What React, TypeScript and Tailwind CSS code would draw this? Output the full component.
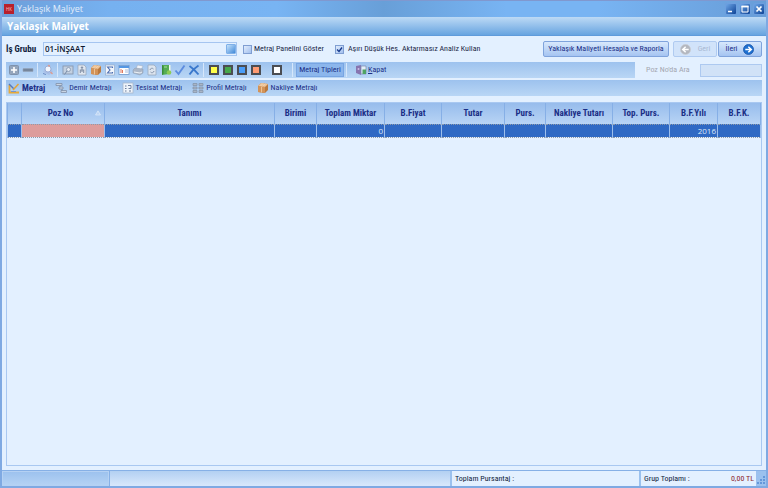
import React from "react";

const I = ({ children }: { children: React.ReactNode }) => (
  <svg viewBox="0 0 12 12" className="h-3 w-3 shrink-0" aria-hidden="true">{children}</svg>
);

const icons = {
  Ekle: <I><rect x="1.5" y="1.5" width="9" height="9" rx="1" fill="#94a5bc" stroke="#7f92ac" /><path d="M6 3v6M3 6h6" stroke="#fff" strokeWidth="1.6" /></I>,
  Sil: <I><rect x="1" y="4.5" width="10" height="3" rx=".5" fill="#76869c" stroke="#94a3b8" strokeWidth=".6" /></I>,
  Temizle: <I><path d="M1 8l4-7 3 1 3 6-4 3z" fill="#a9c0e8" /><circle cx="6" cy="5" r="3" fill="#f1f6fe" stroke="#8ea3cf" strokeWidth=".8" /><path d="M8.500 8l2 2M6 1.500l2 .5" stroke="#dc9c90" strokeWidth="1.400" /><path d="M1 9.500l3 1" stroke="#6c8ac4" /></I>,
  Önizle: <I><rect x="1" y="2" width="10" height="8" fill="#c3d0e0" stroke="#8798b0" strokeWidth=".9" /><circle cx="6.500" cy="5.500" r="2" fill="#e4ebf4" stroke="#8495ae" strokeWidth=".8" /><path d="M5 7L2.500 10.500" stroke="#7488a5" /></I>,
  Bul: <I><path d="M2 1h6l2 2v8H2z" fill="#dfe6ef" stroke="#95a2b5" strokeWidth=".7" /><circle cx="6" cy="3.600" r="1.200" fill="#8592a8" /><path d="M4.300 9V6h3.400v3M6 5v3" stroke="#8592a8" strokeWidth="1.100" fill="none" /></I>,
  Paket: <I><path d="M1 4l3-3 7 1v6l-3 3-7-1z" fill="#b9793f" /><path d="M1 4l3-3 7 1-3 3z" fill="#edc397" /><path d="M8 5v6L1 10V4z" fill="#d39358" /><path d="M3.200 4.300l3-3M5.500 4.600l3-3M4.500 4.500v6" stroke="#f6d8b2" strokeWidth=".7" /></I>,
  Topla: <I><rect x="1.500" y="1" width="9" height="10" fill="#f1f6fc" stroke="#96acc9" strokeWidth=".7" /><path d="M8.500 4V3H3.500L6 6 3.500 9h5V8" fill="none" stroke="#4a6cb0" strokeWidth="1.100" /></I>,
  Tablo: <I><rect x="1" y="1.500" width="10" height="9" fill="#fff" stroke="#6b97ce" strokeWidth=".8" /><path d="M1 3h10" stroke="#5597e3" strokeWidth="2" /><path d="M3 5v4M4.500 6v3" stroke="#df7960" /><path d="M7 6h3M7 8h3" stroke="#a7badb" /></I>,
  Yazdır: <I><path d="M4 5l1.500-4L11 2 9 6z" fill="#eff3f9" stroke="#9aa8bd" strokeWidth=".5" /><path d="M1 6l2-2 8 1v4l-3 2-7-2z" fill="#aab6c7" stroke="#8b9ab1" strokeWidth=".5" /><path d="M2 8l6 1 2-1" stroke="#edf2f8" fill="none" /></I>,
  Yenile: <I><path d="M2 1h6l2 2v8H2z" fill="#dde5ef" stroke="#9aa9be" strokeWidth=".8" /><path d="M4 6a2 2 0 013.500-1M8 7a2 2 0 01-3.500 1" stroke="#8292aa" fill="none" /></I>,
  Aktar: <I><path d="M2 1h7v9l-7 1z" fill="#55ad55" /><path d="M2 1l1.500 1v8L2 11z" fill="#398b3b" /><path d="M9 1h1.500v8H9z" fill="#eef7e9" /><circle cx="9" cy="8.500" r="2.300" fill="#8ccb55" /><path d="M4 3h3" stroke="#a5dca0" /></I>,
  Onayla: <I><path d="M1.500 6.500L4.500 10 10.500 1.500" fill="none" stroke="#5d8cdf" strokeWidth="1.900" /></I>,
  İptal: <I><path d="M1.500 2Q6 5 10.500 10.500M10.500 1.500Q5 5 1.500 10.500" fill="none" stroke="#3a78cc" strokeWidth="1.900" /></I>,
  Metraj: <I><path d="M1.500 3v7.500H11" fill="none" stroke="#e6a93a" strokeWidth="1.800" /><path d="M1 2l5 5" stroke="#5679b9" strokeWidth="1.400" /><path d="M5 8l5.500-6" stroke="#e3a43a" strokeWidth="1.600" /><path d="M3 9.500h5" stroke="#7795cb" /></I>,
  Demir: <I><path d="M1 1.500h6v2H1zM4 5h4v2H4zM6 8.500h5.500v2H6z" fill="#c9d5e4" stroke="#8191a8" strokeWidth=".8" /><path d="M5 3.500V5M7 7v1.500" stroke="#8191a8" /></I>,
  Tesisat: <I><rect x="1" y="1" width="10" height="10" fill="#eef4fb" stroke="#a9b7cb" strokeWidth=".8" /><path d="M3 4h1.500M3 6.500h1.500M3 9h1.500M7 9h2" stroke="#6c7d9b" /><path d="M6 3.500h3v3H6.500" stroke="#7586a5" fill="none" /></I>,
  Profil: <I><path d="M1 1.500h4v2H1zM7 1.500h4v2H7zM1 5h4v2H1zM7 5h4v2H7zM1 8.500h4v2H1zM7 8.500h4v2H7z" fill="#a9b5c6" stroke="#8795ab" strokeWidth=".8" /></I>,
  Kapat: <I><path d="M1 2l5-1v10L1 9z" fill="#8775b0" /><path d="M6 2h5v8H6z" fill="#e3eef8" stroke="#7587b0" strokeWidth=".7" /><path d="M7.500 5.500H11V10H7.500z" fill="#4fa364" /><circle cx="3.500" cy="5" r="1" fill="#c9bde4" /></I>,
};
type IconName = keyof typeof icons;

const groups: IconName[][] = [
  ["Ekle", "Sil"],
  ["Temizle"],
  ["Önizle", "Bul", "Paket", "Topla", "Tablo", "Yazdır", "Yenile", "Aktar", "Onayla", "İptal"],
];

const Sep = () => <span className="mr-[3px] ml-[2px] h-[14px] w-px shrink-0 bg-[#d6e7fb]" />;

const Tool = ({ name }: { name: IconName }) => (
  <button aria-label={name} className="flex h-[14px] w-[14px] shrink-0 items-center justify-center">{icons[name]}</button>
);

const Swatch = ({ name, color }: { name: string; color: string }) => (
  <button aria-label={name} className="flex h-[14px] w-[14px] shrink-0 items-center justify-center">
    <span className={"h-[10px] w-[10px] border-2 border-[#4b4d52] " + color} />
  </button>
);

const tabs: [string, IconName][] = [
  ["Metraj", "Metraj"],
  ["Demir Metrajı", "Demir"],
  ["Tesisat Metrajı", "Tesisat"],
  ["Profil Metrajı", "Profil"],
  ["Nakliye Metrajı", "Paket"],
];

const columns = [
  ["", "w-[14px]", ""],
  ["Poz No", "w-[83px]", ""],
  ["Tanımı", "", ""],
  ["Birimi", "w-[42px]", ""],
  ["Toplam Miktar", "w-[68px]", "0"],
  ["B.Fiyat", "w-[57px]", ""],
  ["Tutar", "w-[63px]", ""],
  ["Purs.", "w-[41px]", ""],
  ["Nakliye Tutarı", "w-[67px]", ""],
  ["Top. Purs.", "w-[57px]", ""],
  ["B.F.Yılı", "w-[48px]", "2016"],
  ["B.F.K.", "w-[43px]", ""],
];

const winBtn = "flex h-3 w-3 items-center justify-center rounded-[2px] border border-[#6d9fdf] bg-linear-to-br from-[#6ea6e6] to-[#0d4396]";
const btn = "flex h-4 shrink-0 items-center justify-center rounded-[2px] border border-[#7fa3dc] bg-linear-to-b from-[#d8e8fc] to-[#a5c4f1] text-[#1b2f86]";
const check = "h-[9px] w-[9px] appearance-none border border-[#7f9ed2] bg-linear-to-br from-[#e0ecfc] to-[#a3c0ee]";
const bar = "bg-linear-to-b from-[#9dc2ee] to-[#b9d6f5]";

const Arrow = ({ flip, ring, color }: { flip?: boolean; ring: string; color: string }) => (
  <svg viewBox="0 0 12 12" className="h-[11px] w-[11px]" aria-hidden="true">
    <circle cx="6" cy="6" r="5.500" fill={color} stroke={ring} strokeWidth=".8" />
    <path d={flip ? "M9.500 6h-6M6.200 3L3 6l3.200 3" : "M2.500 6h6M5.800 3L9 6 5.800 9"} stroke="#fff" strokeWidth="1.700" fill="none" />
  </svg>
);

export default function App() {
  return (
    <div className="flex min-h-screen flex-col border-x-2 border-b-2 border-[#7fa9e2] bg-[#e3f0ff] font-['Roboto_Condensed','Open_Sans',sans-serif] text-[8px] leading-3 text-[#1b2f86]">
      <header className="flex h-[17px] items-center gap-[3px] border-t border-[#8098cf] bg-[linear-gradient(90deg,#6d9fda_0%,#76b1f0_14%,#78b4f3_36%,#689fd8_50%,#78b4f3_66%,#78b4f3_78%,#689dd8_100%)] pr-px pl-[2px]">
        <span className="flex h-[10px] w-[10px] items-center justify-center bg-[#b8202c] text-[5px] leading-none text-[#f0b4b8]">HK</span>
        <span className="flex-1 font-['Open_Sans'] text-[9px] text-[#e3eefb]">Yaklaşık Maliyet</span>
        <span className="flex gap-[2px]">
          <button aria-label="Simge durumuna küçült" className={winBtn}><svg viewBox="0 0 8 8" className="h-2 w-2"><path d="M1 6.500h4" stroke="#fff" strokeWidth="1.500" /></svg></button>
          <button aria-label="Ekranı kapla" className={winBtn}><svg viewBox="0 0 8 8" className="h-2 w-2"><path d="M1 1v6h6V1" fill="none" stroke="#fff" strokeWidth="1" /><path d="M.5 1.500h7" stroke="#fff" strokeWidth="1.800" /></svg></button>
          <button aria-label="Pencereyi kapat" className={winBtn}><svg viewBox="0 0 8 8" className="h-2 w-2"><path d="M1.500 1.500l5 5M6.500 1.500l-5 5" stroke="#fff" strokeWidth="1.700" /></svg></button>
        </span>
      </header>
      <h1 className="h-[19px] border-b border-[#5f9bdb] bg-linear-to-b from-[#bddaf5] to-[#67a4e0] px-[5px] font-['Open_Sans'] text-[10px] leading-[19px] font-bold text-white">Yaklaşık Maliyet</h1>

      <main className="flex flex-1 flex-col px-1">
        <div className="flex h-[26px] items-center">
          <label htmlFor="grup" className="w-[37px] shrink-0 text-[9px] font-bold whitespace-nowrap text-[#101c3c]">İş Grubu</label>
          <div className="relative w-[194px]">
            <select id="grup" className="block h-[14px] w-full appearance-none border border-[#a5c5f0] bg-[#e3f0ff] px-[1px] font-['Open_Sans'] text-[8px] leading-3 font-semibold text-[#0d1730]">
              <option>01-İNŞAAT</option>
            </select>
            <span className="pointer-events-none absolute top-[2px] right-[1px] h-[10px] w-[10px] rounded-[1px] border border-[#7fb0e8] bg-linear-to-br from-[#c5e2fb] to-[#3f8ad8]" />
          </div>
          <label className="ml-[6px] flex shrink-0 items-center gap-[2px] whitespace-nowrap text-[#1c2848]">
            <input type="checkbox" className={check} />Metraj Panelini Göster
          </label>
          <label className="ml-[11px] flex shrink-0 items-center gap-1 whitespace-nowrap text-[#1c2848]">
            <span className="relative flex">
              <input type="checkbox" defaultChecked className={"peer " + check} />
              <svg viewBox="0 0 9 9" className="pointer-events-none absolute inset-0 hidden h-[9px] w-[9px] peer-checked:block"><path d="M2 4.500l2 2 3-4" fill="none" stroke="#173a8c" strokeWidth="1.300" /></svg>
            </span>
            Aşırı Düşük Hes. Aktarmasız Analiz Kullan
          </label>
          <button className={btn + " ml-auto w-[126px]"}>Yaklaşık Maliyeti Hesapla ve Raporla</button>
          <button disabled className="ml-1 flex h-4 w-[44px] shrink-0 items-center justify-center gap-[7px] rounded-[2px] border border-[#b0cbf1] bg-[#d1e3fa] text-[#a9b9d3]"><Arrow flip color="#b3b7bf" ring="#c9ccd2" />Geri</button>
          <button className={btn + " ml-px w-[44px] gap-[6px]"}>İleri<Arrow color="#1d6fd0" ring="#1450a4" /></button>
        </div>

        <div className="flex items-center">
          <div role="toolbar" aria-label="Metraj araçları" className={"flex h-4 w-[629px] shrink items-center pl-px " + bar}>
            {groups.map((g, i) => (
              <React.Fragment key={i}>
                {g.map((n) => <Tool key={n} name={n} />)}
                <Sep />
              </React.Fragment>
            ))}
            <Swatch name="Sarı" color="bg-[#ffff4a]" />
            <Swatch name="Yeşil" color="bg-[#46a84b]" />
            <Swatch name="Mavi" color="bg-[#4a9df8]" />
            <Swatch name="Turuncu" color="bg-[#ff9b73]" />
            <span className="mr-[6px] ml-[7px] flex"><Swatch name="Beyaz" color="bg-white" /></span>
            <Sep />
            <button className="h-[14px] w-[48px] shrink-0 border border-[#78a5e3] bg-[#8cb6ec] text-center leading-3 whitespace-nowrap">Metraj Tipleri</button>
            <Sep />
            <button className="ml-[5px] flex shrink-0 items-center gap-px">{icons.Kapat}<span><u>K</u>apat</span></button>
          </div>
          <label htmlFor="ara" className="ml-[11px] flex-1 whitespace-nowrap text-[#a3a7b1]">Poz No'da Ara</label>
          <input id="ara" disabled className="h-[13px] w-[62px] shrink-0 border border-[#adc9f0] bg-[#d1e2f7] px-1" />
        </div>

        <nav className={"mt-[2px] flex h-4 items-center gap-[10px] pl-[2px] " + bar}>
          {tabs.map(([label, icon], i) => (
            <button key={label} className={"flex items-center gap-[2px] whitespace-nowrap " + (i === 0 ? "text-[9px] font-bold" : "")}>{icons[icon]}{label}</button>
          ))}
        </nav>

        <section className="mt-[6px] mb-1 flex-1 border border-[#a9c8f1]">
          <table className="w-full table-fixed border-collapse">
            <thead>
              <tr className="h-[21px] bg-linear-to-b from-[#97bcec] to-[#b8d4f5]">
                {columns.map(([name, w], i) => (
                  <th key={i} scope="col" className={"border-x border-[#86afe6] p-0 text-[9px] font-bold whitespace-nowrap " + w}>
                    {name === "Poz No" ? (
                      <span className="flex items-center pr-[3px]"><span className="flex-1 pl-1">Poz No</span><svg viewBox="0 0 6 6" className="h-[6px] w-[6px]"><path d="M3 .8L5.500 5h-5z" fill="#bdd5f3" stroke="#dfecfb" strokeWidth=".7" /></svg></span>
                    ) : name}
                  </th>
                ))}
              </tr>
            </thead>
            <tbody>
              <tr className="h-[13px] border-y border-dotted border-[#8f9aa8] bg-[#2f69c4]">
                {columns.map(([name, , value], i) => (
                  <td key={i} className={"border-x border-x-[#9dbfec] p-0 pr-px text-right font-['Open_Sans'] text-[8px] leading-[11px] text-[#dce8fa] [border-inline-style:solid] " + (name === "Poz No" ? "border-l-[#4a4a52] bg-[#dd9d9c]" : "")}>{value}</td>
                ))}
              </tr>
            </tbody>
          </table>
        </section>
      </main>

      <footer className="flex h-4 items-stretch border-t border-[#86b0e6] bg-[#9bc1ee] text-[#101c3c]">
        <div className="w-[107px] shrink-0 border border-[#b5d1f3] bg-linear-to-b from-[#9dc2ee] to-[#b4d2f4]" />
        <div className="flex-1 border-l border-[#86b0e6] bg-linear-to-b from-[#b3d0f2] to-[#d8e8fb]" />
        <div className="ml-[2px] w-[187px] shrink-0 bg-[#e3f0ff] pl-[3px] leading-[15px]">Toplam Pursantaj :</div>
        <div className="ml-[2px] flex w-[115px] shrink-0 justify-between bg-[#e3f0ff] pr-[2px] pl-[3px] leading-[15px]">
          <span>Grup Toplamı :</span><output className="text-[#8d1f2d]">0,00 TL</output>
        </div>
        <svg viewBox="0 0 10 14" className="h-[14px] w-[10px] shrink-0"><path d="M7 5h2v2H7zM4 8h2v2H4zM7 8h2v2H7zM1 11h2v2H1zM4 11h2v2H4zM7 11h2v2H7z" fill="#6497da" /></svg>
      </footer>
    </div>
  );
}
